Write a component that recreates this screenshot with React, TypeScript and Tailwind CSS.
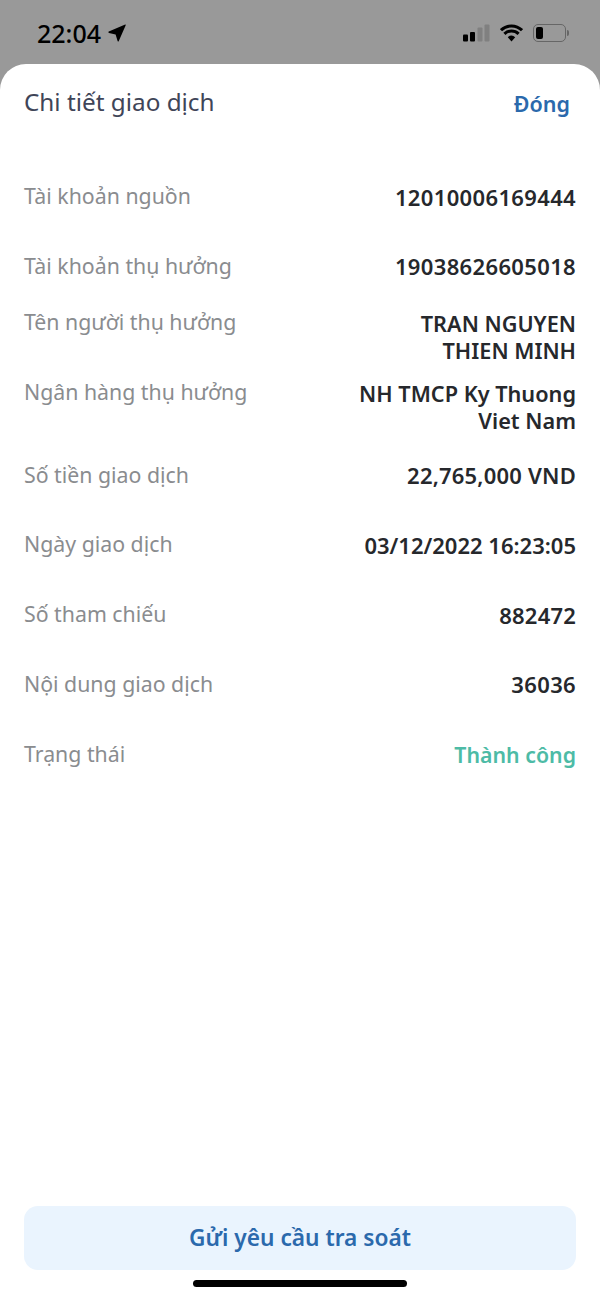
import React from 'react';

const rows = [
  { label: 'Tài khoản nguồn', value: '12010006169444', valueClass: 'text-[22px] tracking-[0.35px] text-[#26282c]' },
  { label: 'Tài khoản thụ hưởng', value: '19038626605018', valueClass: 'text-[22px] tracking-[0.35px] text-[#26282c]' },
  { label: 'Tên người thụ hưởng', value: 'TRAN NGUYEN THIEN MINH', multi: true, valueClass: 'text-[21.7px] text-[#26282c]' },
  { label: 'Ngân hàng thụ hưởng', value: 'NH TMCP Ky Thuong Viet Nam', multi: true, valueClass: 'text-[21.7px] text-[#26282c]' },
  { label: 'Số tiền giao dịch', value: '22,765,000 VND', valueClass: 'text-[22px] tracking-[0.2px] text-[#26282c]' },
  { label: 'Ngày giao dịch', value: '03/12/2022 16:23:05', valueClass: 'text-[22px] text-[#26282c]' },
  { label: 'Số tham chiếu', value: '882472', valueClass: 'text-[22px] tracking-[0.2px] text-[#26282c]' },
  { label: 'Nội dung giao dịch', value: '36036', valueClass: 'text-[22px] tracking-[0.35px] text-[#26282c]' },
  { label: 'Trạng thái', value: 'Thành công', valueClass: 'text-[21.3px] text-[#4dbba6]' },
];

const StatusBar = () => (
  <div className="h-[64px] shrink-0 flex items-start justify-between pl-[37px] pr-[31px] pt-[19px]">
    <div className="flex items-center gap-[7px]">
      <span className="text-[25px] leading-[28px] font-medium text-black">22:04</span>
      <svg width="18" height="18" viewBox="0 0 18 18">
        <path d="M17.2 0.6 Q18 0.4 17.6 1.4 L10.8 17 Q10.2 18 9.6 17 L7.6 10.6 L1 9 Q-0.2 8.4 0.8 7.6 Z" fill="#000" />
      </svg>
    </div>
    <div className="flex items-center gap-[10px] h-[28px]">
      <svg width="27" height="18" viewBox="0 0 27 18">
        <rect x="0" y="10.5" width="5" height="7" rx="1" fill="#000" />
        <rect x="7" y="8" width="5" height="9.5" rx="1" fill="#000" />
        <rect x="14.5" y="3.5" width="5" height="14" rx="1" fill="#808080" />
        <rect x="21.5" y="0.5" width="5" height="17" rx="1" fill="#808080" />
      </svg>
      <svg width="23" height="18" viewBox="0 0 23 18">
        <path d="M11.5 17.5 L7.8 13.2 A5.6 5.6 0 0 1 15.2 13.2 Z" fill="#000" />
        <path d="M4.4 9.8 A10.2 10.2 0 0 1 18.6 9.8" fill="none" stroke="#000" strokeWidth="3" />
        <path d="M1 6.2 A15 15 0 0 1 22 6.2" fill="none" stroke="#000" strokeWidth="3" />
      </svg>
      <div className="flex items-center gap-[1px]">
        <div className="w-[33px] h-[18px] rounded-[5px] border border-[#666] p-[2px]">
          <div className="w-[7px] h-full rounded-[2px] bg-black" />
        </div>
        <div className="w-[2px] h-[6px] rounded-r-sm bg-[#666]" />
      </div>
    </div>
  </div>
);

const App: React.FC = () => {
  return (
    <div className="w-[600px] h-[1299px] flex flex-col bg-[#999999] font-['Noto_Sans',sans-serif] overflow-hidden">
      <StatusBar />
      <div className="flex-1 flex flex-col bg-white rounded-t-[26px] px-[24px]">
        <div className="flex items-center justify-between pt-[10px] h-[66px] shrink-0">
          <h1 className="text-[24.3px] leading-[32px] font-normal text-[#3f4558]">Chi tiết giao dịch</h1>
          <button className="text-[21.5px] leading-[28px] font-semibold text-[#2b69ac] pr-[6px] pt-[3px]">Đóng</button>
        </div>

        <div className="flex flex-col gap-[13.7px] mt-[39px]">
          {rows.map((row) => (
            <div key={row.label} className={`flex justify-between h-[56px] ${row.multi ? 'items-start' : 'items-center'}`}>
              <span className={`text-[21.3px] leading-[28px] text-[#8a8c8f] ${row.multi ? '' : '-mt-[2px]'}`}>{row.label}</span>
              <div className={`text-right leading-[27px] font-semibold ${row.multi ? 'w-[225px] pt-[2px]' : ''} ${row.valueClass}`}>
                {row.value}
              </div>
            </div>
          ))}
        </div>

        <div className="mt-auto">
          <button className="w-full h-[64px] rounded-[14px] bg-[#eaf4fe] text-[22.7px] font-semibold text-[#2b69ac]">Gửi yêu cầu tra soát</button>
          <div className="flex justify-center pt-[10px] pb-[12px]">
            <div className="w-[214px] h-[7px] rounded-full bg-black" />
          </div>
        </div>
      </div>
    </div>
  );
};

export default App;
